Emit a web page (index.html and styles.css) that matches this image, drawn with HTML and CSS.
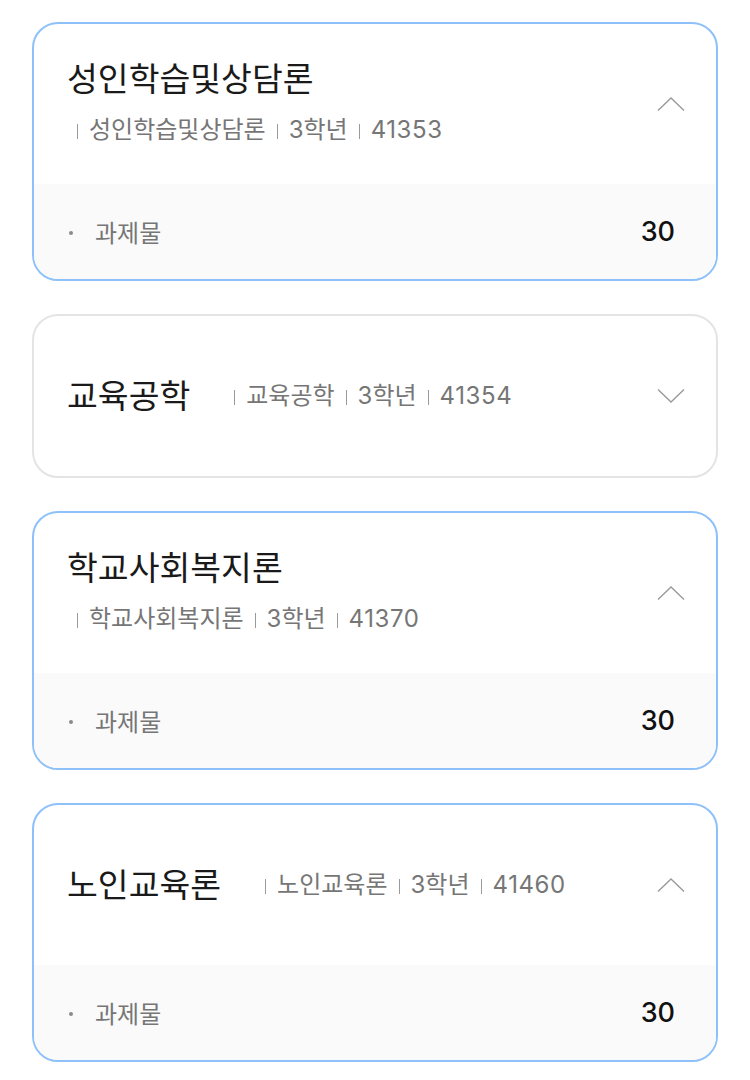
FILE: index.html
```html
<!DOCTYPE html>
<html lang="ko">
<head>
<meta charset="utf-8">
<link rel="stylesheet" href="styles.css">
</head>
<body>
<div class="list">
  <div class="card open">
    <div class="head stacked">
      <div class="texts">
        <div class="title">성인학습및상담론</div>
        <div class="sub"><span class="seg">성인학습및상담론</span><span class="seg">3학년</span><span class="seg">41353</span></div>
      </div>
      <svg class="chev" width="28" height="16" viewBox="0 0 28 16"><path d="M1 14.5 L14 2 L27 14.5" fill="none" stroke="#9a9a9a" stroke-width="1.4"/></svg>
    </div>
    <div class="foot"><span class="dot"></span><span class="label">과제물</span><span class="num">30</span></div>
  </div>

  <div class="card">
    <div class="head inline">
      <div class="texts">
        <div class="title">교육공학</div>
        <div class="sub"><span class="seg">교육공학</span><span class="seg">3학년</span><span class="seg">41354</span></div>
      </div>
      <svg class="chev" width="28" height="16" viewBox="0 0 28 16"><path d="M1 1.5 L14 14 L27 1.5" fill="none" stroke="#9a9a9a" stroke-width="1.4"/></svg>
    </div>
  </div>

  <div class="card open">
    <div class="head stacked">
      <div class="texts">
        <div class="title">학교사회복지론</div>
        <div class="sub"><span class="seg">학교사회복지론</span><span class="seg">3학년</span><span class="seg">41370</span></div>
      </div>
      <svg class="chev" width="28" height="16" viewBox="0 0 28 16"><path d="M1 14.5 L14 2 L27 14.5" fill="none" stroke="#9a9a9a" stroke-width="1.4"/></svg>
    </div>
    <div class="foot"><span class="dot"></span><span class="label">과제물</span><span class="num">30</span></div>
  </div>

  <div class="card open">
    <div class="head inline">
      <div class="texts">
        <div class="title">노인교육론</div>
        <div class="sub"><span class="seg">노인교육론</span><span class="seg">3학년</span><span class="seg">41460</span></div>
      </div>
      <svg class="chev" width="28" height="16" viewBox="0 0 28 16"><path d="M1 14.5 L14 2 L27 14.5" fill="none" stroke="#9a9a9a" stroke-width="1.4"/></svg>
    </div>
    <div class="foot"><span class="dot"></span><span class="label">과제물</span><span class="num">30</span></div>
  </div>
</div>
</body>
</html>
```

FILE: styles.css
```css
html, body {
  margin: 0;
  padding: 0;
  background: #ffffff;
}
body {
  font-family: "Inter", "Noto Sans CJK KR", sans-serif;
  color: #1a1a1a;
}
.list {
  display: flex;
  flex-direction: column;
  gap: 33px;
  padding: 22px 32px 0 32px;
}
.card {
  border: 2px solid #e4e4e4;
  border-radius: 26px;
  overflow: hidden;
  background: #fff;
}
.card.open {
  border-color: #8ec1f9;
}
.head {
  height: 160px;
  display: flex;
  align-items: center;
  justify-content: space-between;
  padding: 0 31px 0 33px;
  box-sizing: border-box;
}
.texts {
  display: flex;
}
.stacked .texts {
  flex-direction: column;
  gap: 16px;
  margin-top: -4px;
}
.inline .texts {
  flex-direction: row;
  align-items: center;
  gap: 44px;
}
.title {
  font-size: 33.5px;
  line-height: 40px;
  color: #1a1a1a;
}
.sub {
  display: flex;
  align-items: center;
  font-size: 24px;
  line-height: 30px;
  color: #767676;
}
.seg {
  display: flex;
  align-items: center;
}
.seg:last-child {
  letter-spacing: 0.6px;
}
.seg::before {
  content: "";
  display: inline-block;
  width: 1px;
  height: 15px;
  background: #9a9a9a;
  margin: 2px 11px 0 11px;
}
.stacked .seg:first-child::before {
  margin-left: 10px;
}
.inline .seg:first-child::before {
  margin-left: 0;
}
.chev {
  display: block;
  flex: none;
}
.foot {
  height: 95px;
  background: #fafafa;
  display: flex;
  align-items: center;
  padding: 0 41px 0 35px;
  box-sizing: border-box;
}
.dot {
  width: 4px;
  height: 4px;
  border-radius: 50%;
  background: #8a8a8a;
  margin-right: 22px;
  margin-top: 2px;
}
.label {
  font-size: 24px;
  color: #767676;
  flex: 1;
}
.num {
  font-size: 27px;
  color: #111;
  font-weight: 500;
}
```
